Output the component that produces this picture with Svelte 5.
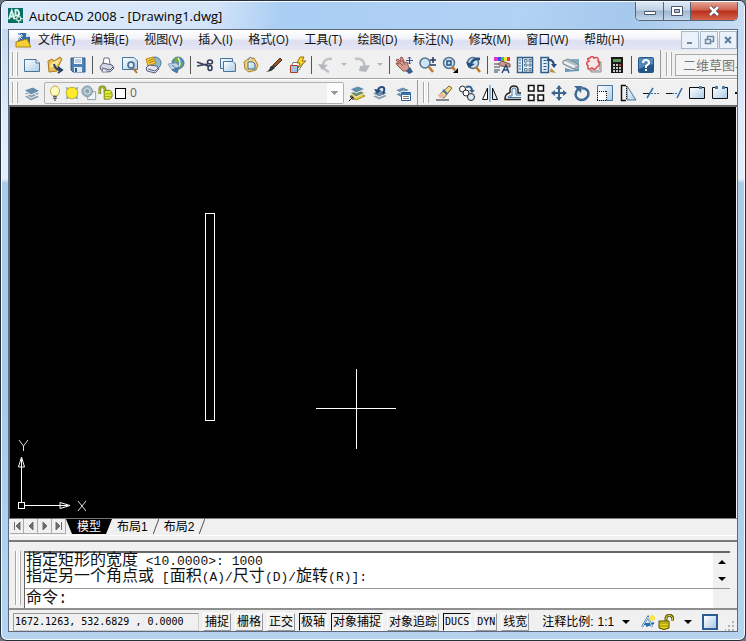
<script>
  const icons = {
    new: '<path d="M1.500 3.500H13L16.500 7V15.500H1.500Z" fill="url(#sheet)" stroke="#47749c"/><path d="M13 3.500V7H16.500" fill="#fff" stroke="#47749c"/>',
    open: '<path d="M2 5L6 3L8 5L14 1L16 3L13 9L11 15L3 16Z" fill="#e9bd55" stroke="#a9791e"/><path d="M5 7L15 3L11 9L4 12Z" fill="#fbe5a0"/><path d="M8 8Q9 14 15 14M12 11L16 14L12 17" fill="none" stroke="#24415f" stroke-width="2"/>',
    save: '<path d="M2 2H16V16H4L2 14Z" fill="#4f81b4" stroke="#2e5c8b"/><path d="M5 2H13V8H5Z" fill="#f3f8fc"/><path d="M6 4H12M6 6H12" stroke="#8bacc9"/><path d="M5 11H13V16H5Z" fill="#dbe7f1"/><path d="M7 12V16" stroke="#2e5c8b" stroke-width="2"/>',
    print: '<path d="M5 8L6 2H11L12 8" fill="#fff" stroke="#6d7089"/><path d="M2 11L5 7L14 9L16 12L12 16L3 14Z" fill="#d5d7e1" stroke="#5c5f7b"/><path d="M4 12L12 14L15 11" fill="none" stroke="#5c5f7b"/><path d="M5 13L4 16H10" fill="#fff" stroke="#777b92"/>',
    preview: '<path d="M1.500 1.500H13L16.500 5V13.500H1.500Z" fill="url(#sheet)" stroke="#47749c"/><circle cx="10" cy="9" r="3" fill="#d3e9f5" stroke="#456789" stroke-width="1.500"/><path d="M12 12L16 17" stroke="#ad722d" stroke-width="2"/>',
    publish: '<circle cx="11" cy="7" r="6" fill="#8fb7cc" stroke="#47779a"/><path d="M2 3L9 1L12 7L4 10Z" fill="#ffcf3b" stroke="#bd8315"/><path d="M4 5L9 3M5 7L10 5" stroke="#9b7a1e"/><path d="M2 12L5 9L13 10L15 13L11 17L3 15Z" fill="#e2e4ea" stroke="#555e82"/><path d="M4 13L11 15L14 12" fill="none" stroke="#555e82"/>',
    web: '<circle cx="11" cy="7" r="6" fill="#4c92c8" stroke="#51768d"/><path d="M7 3Q10 0 13 2L12 6L8 7ZM12 9L16 7L14 12Z" fill="#6fad45"/><path d="M11 2Q15 7 11 12" fill="none" stroke="#ffe8a0" stroke-width="1.500"/><path d="M1 8L9 7L13 11L10 14L5 14Z" fill="#c6d5e4" stroke="#8ea5bb"/><path d="M5 9L10 13M12 11L10 17L5 14Z" fill="#4c78a6" stroke="#4c78a6"/>',
    cut: '<path d="M1 6L12 10M1 10L12 8" stroke="#39435d" stroke-width="1.500"/><ellipse cx="14" cy="6" rx="2.500" ry="2" fill="none" stroke="#30395c" stroke-width="1.500"/><ellipse cx="14" cy="12" rx="2" ry="2.500" fill="none" stroke="#30395c" stroke-width="1.500"/>',
    copy: '<path d="M1.500 2.500H13.500V12.500H1.500Z" fill="url(#sheet)" stroke="#47749c"/><path d="M4.500 5.500H14L16.500 8V15.500H4.500Z" fill="url(#sheet)" stroke="#47749c"/>',
    paste: '<path d="M2 6L6 3L12 2L16 9L14 14L7 16L3 13Z" fill="#ecd27e" stroke="#a08127"/><path d="M6 4L8 1L11 3" fill="#ddd" stroke="#777"/><path d="M6 6H11L13 8V13H6Z" fill="url(#sheet)" stroke="#416d95"/>',
    brush: '<path d="M15 2L17 4L10 11L8 9Z" fill="#995522" stroke="#45332b"/><path d="M8 9L10 12L6 15L1 16Q5 14 5 11Z" fill="#30343a"/>',
    blockedit: '<path d="M5 6.500H15.500L11 14H2Z" fill="#fff" stroke="#777"/><path d="M2.500 9.500H9.500V16.500H2.500Z" fill="#9fc2e3" stroke="#b13b22"/><path d="M12 1H16L14 5H18L10 12L12 7H9Z" fill="#ffdc25" stroke="#966c16"/>',
    undo: '<path d="M12 16Q5 13 6 8Q8 2 15 3" fill="none" stroke="#bfc1c4" stroke-width="2.500"/><path d="M1 8L11 9L5 14Z" fill="#b4b7bc"/>',
    redo: '<path d="M2 3Q9 2 11 7Q12 10 10 12" fill="none" stroke="#bfc1c4" stroke-width="2.500"/><path d="M7 10L17 9L13 16L6 15Z" fill="#b4b7bc"/>',
    pan: '<path d="M1 4L3 3L6 6L5 2L7 1L10 7L12 6L14 12L13 15L8 15L2 9L1 7L4 8Z" fill="#d69b91" stroke="#965950"/><path d="M3 5L8 10M7 4L10 9" stroke="#965950"/><path d="M11 15L15 11L18 16L14 18Z" fill="#395b8d"/><path d="M14.500 1V8M11 4.500H18M13 2.500L14.500 1L16 2.500M13 6.500L14.500 8L16 6.500" fill="none" stroke="#354b86"/>',
    zoomrt: '<circle cx="7" cy="7" r="5" fill="#cbe3f2" stroke="#53718d" stroke-width="1.500"/><path d="M11 11L15 16" stroke="#bd7928" stroke-width="2.500"/><path d="M12 4H18M15 1V7M12 9H18" stroke="#26375b" stroke-width="1.500"/>',
    zoomwin: '<circle cx="8" cy="7" r="5.500" fill="#cbe3f2" stroke="#53718d" stroke-width="1.500"/><path d="M6 5H10V9H6Z" fill="#b7d7ef" stroke="#28547f" stroke-width="1.500"/><path d="M11 11L14 14" stroke="#bd7928" stroke-width="2.500"/><path d="M17 12V17H12Z" fill="#000"/>',
    zoomprev: '<circle cx="9" cy="7" r="5.500" fill="#cbe3f2" stroke="#53718d" stroke-width="1.500"/><path d="M12 11L16 16" stroke="#bd7928" stroke-width="2.500"/><path d="M16 3Q10 2 7 7" fill="none" stroke="#294e7e" stroke-width="2.500"/><path d="M2 6L11 8L5 12Z" fill="#294e7e"/>',
    props: '<path d="M1 1H5V5H1Z" fill="#e132c2"/><path d="M5 1H8V5H5Z" fill="#4549ed"/><path d="M8 1H11V5H8Z" fill="#39c940"/><path d="M11 1H14V5H11Z" fill="#f4e43c"/><path d="M14 1H17V5H14Z" fill="#ee392d"/><path d="M5 8L9 5L17 8V11L8 10Z" fill="#cf9889" stroke="#75534b"/><path d="M1 8H5M1 11H7M1 14H7M1 16H5" stroke="#333e61"/><path d="M9 17L13 9L16 17M11 14H15" fill="none" stroke="#294b7b" stroke-width="1.500"/>',
    dcenter: '<path d="M1.500 1.500H16.500V16.500H1.500Z" fill="#e3eff8" stroke="#315c86" stroke-width="1.500"/><path d="M6.500 2V16" stroke="#315c86"/><path d="M3 4H5M3 7H5M3 10H5M3 13H5" stroke="#2b669b"/><path d="M8.500 3.500H11V6H8.500ZM13 3.500H15V6H13ZM8.500 8H11V10H8.500ZM13 8H15V10H13ZM8.500 12.500H11V15H8.500ZM13 12.500H15V15H13Z" fill="#fff6bd" stroke="#577a99"/>',
    palettes: '<path d="M2 1.500H9.500V16.500H2Z" fill="#deecf8" stroke="#315c86" stroke-width="1.500"/><path d="M4.500 4.500H7.500M4.500 7.500H7.500M4.500 10.500H7.500M4.500 13.500H7.500" stroke="#315c86"/><path d="M8 4Q14 3 15 9" fill="none" stroke="#284a76" stroke-width="2"/><path d="M12 8H18L15 12Z" fill="#284a76"/><path d="M12 12L17 17L11 16Z" fill="#ba8c38"/>',
    sheetset: '<path d="M8 3H17V10L12 9Z" fill="#82aac2"/><path d="M1 5L6 3L16 8L17 11L11 13L1 8Z" fill="#b3bfc4" stroke="#778b94"/><path d="M2 6L13 11" stroke="#f4f6f7" stroke-width="2"/><path d="M3 12L10 14L17 12V15L3 16Z" fill="#6b95b1"/>',
    markup: '<path d="M4 4H14V14H4ZM6 6H16V16H6Z" fill="#ddd" stroke="#888"/><path d="M2 2H14V14H2Z" fill="#f6e6e6"/><path d="M4 5Q1 2 5 2Q7-1 9 2Q14 0 13 5Q16 9 12 11Q10 15 7 12Q2 15 3 10Q0 7 4 5Z" fill="none" stroke="#dc4850" stroke-width="1.500"/>',
    calc: '<path d="M3 1H15V17H3Z" fill="#191919"/><path d="M5 3H13V6H5Z" fill="#5c9b5b"/><path d="M5 9H7M8 9H10M11 9H13M5 12H7M8 12H10M11 12H13M5 15H7M8 15H10M11 15H13" stroke="#fff" stroke-width="1.500"/><path d="M11 9H13" stroke="#d14545" stroke-width="2"/>',
    help: '<rect x="1" y="1" width="16" height="16" rx="2" fill="#235789"/><path d="M2 2H16V8Q9 9 2 13Z" fill="#5289b8"/><path d="M6 7Q6 4 9 4Q12 4 12 7Q12 8 9 10V12M9 13V15" fill="none" stroke="#fff" stroke-width="2"/>',
    layers: '<path d="M1 12L10 9L17 13L8 17ZM1 9L10 6L17 10L8 14Z" fill="#899cad" stroke="#eef3f7"/><path d="M1 6L10 3L17 7L8 11Z" fill="#6b8eaa" stroke="#eef3f7"/>',
    layermk: '<path d="M2 12L11 9L17 12L8 16Z" fill="#ebcd3a" stroke="#a78d1a"/><path d="M2 9L11 6L17 9L8 13Z" fill="#718d63" stroke="#e7ecef"/><path d="M2 5L10 2L17 5L8 9Z" fill="#638cab" stroke="#e7ecef"/><path d="M1 17L5 13M2 13H5V16" fill="none" stroke="#111"/>',
    layerprev: '<path d="M1 12L10 9L17 12L8 16Z" fill="#8b9da8" stroke="#eef3f7"/><path d="M1 9L10 6L17 9L8 13Z" fill="#6f8ca5" stroke="#eef3f7"/><path d="M12 10Q15 3 11 3Q8 3 7 6" fill="none" stroke="#244b80" stroke-width="2"/><path d="M3 5L10 6L6 10Z" fill="#244b80"/>',
    layerstate: '<path d="M1 10L10 7L17 10L8 14ZM1 6L9 3L16 6L8 10Z" fill="#7191ab" stroke="#eef3f7"/><path d="M7.500 8.500H16.500V16.500H7.500Z" fill="#fff" stroke="#245e9c"/><path d="M7 9H17V11H7Z" fill="#3574b2"/><path d="M9 12.500H15M9 14.500H15" stroke="#777"/>',
    erase: '<path d="M1 16H14" stroke="#222"/><path d="M14 2L17 4L9 14L5 13L4 11Z" fill="#f5da86" stroke="#7b6732"/><path d="M6 9L10 12L8 14L5 14L3 11Z" fill="#e8b9a8"/><path d="M8 6L12 10" stroke="#3d65a2" stroke-width="2"/>',
    copyobj: '<circle cx="4.500" cy="5" r="3" fill="#fff" stroke="#222"/><circle cx="8" cy="9" r="3" fill="#fff" stroke="#222"/><circle cx="13" cy="13" r="3.500" fill="#ddeaf5" stroke="#222"/><path d="M8 3Q14 1 14 7" fill="none" stroke="#315d8d" stroke-width="2"/><path d="M11 6H17L14 9Z" fill="#315d8d"/>',
    mirror: '<path d="M6.500 4V15.500H1.500Z" fill="#fff" stroke="#111"/><path d="M11.500 4V15.500H16.500Z" fill="#dfeaf3" stroke="#111"/><path d="M9 1V18" stroke="#3382bd"/>',
    offset: '<path d="M6 9V6Q6 2 10 2Q14 2 14 6V9H17M6 9H5Q1 10 1 15.500H17" fill="none" stroke="#222" stroke-width="1.500"/><path d="M8 12V6Q8 4 10 4Q12 4 12 6V11H17M8 12H5L4 13.500H17" fill="none" stroke="#3f79b1"/>',
    array: '<path d="M1.500 1.500H7V7H1.500ZM11 1.500H16.500V7H11ZM1.500 11H7V16.500H1.500ZM11 11H16.500V16.500H11Z" fill="#fff" stroke="#111" stroke-width="1.500"/>',
    move: '<path d="M9 2V16M2 9H16" stroke="#3d658e" stroke-width="2"/><path d="M9 1L12 5H6ZM9 17L12 13H6ZM1 9L5 6V12ZM17 9L13 6V12Z" fill="#3d658e"/>',
    rotate: '<path d="M5 5Q0 11 5 15Q11 18 15 12Q17 5 9 4" fill="none" stroke="#416b94" stroke-width="2.500"/><path d="M1 2L9 2L8 9Z" fill="#416b94"/>',
    scale: '<path d="M1.500 1.500H16.500V16.500H1.500Z" fill="url(#sheet)" stroke="#47749c"/><path d="M1.500 7.500H10.500V16.500H1.500Z" fill="#fff"/><path d="M1 7.500H11M10.500 7V17M1 16.500H11M1.500 7V17" stroke="#111" stroke-dasharray="1 1"/>',
    stretch: '<path d="M8 2L17 16H8Z" fill="url(#sheet)" stroke="#47749c"/><path d="M7 1.500H2.500V16.500H7" fill="none" stroke="#111" stroke-width="1.500"/><path d="M7.500 2V16" stroke="#111" stroke-dasharray="1 1"/>',
    trim: '<path d="M1 9.500H7" stroke="#111"/><path d="M9 9.500H18" stroke="#2d70ab" stroke-dasharray="2 1"/><path d="M11 4L5 14" stroke="#2d70ab" stroke-width="1.500"/>',
    extend: '<path d="M1 9.500H7" stroke="#111"/><path d="M7 9.500H12" stroke="#2d70ab" stroke-dasharray="2 1"/><path d="M17 4L12 14" stroke="#2d70ab" stroke-width="1.500"/>',
    breakpt: '<path d="M1.500 3.500V14.500H16.500V3.500Z" fill="url(#sheet)" stroke="#111"/><path d="M11 2H14V5H11Z" fill="#4a80b0"/>',
    breakseg: '<path d="M5 3.500H1.500V14.500H16.500V3.500H13" fill="url(#sheet)" stroke="#111"/><path d="M4 2H7V5H4ZM11 2H14V5H11Z" fill="#4a80b0"/>',
    join: '<path d="M1 9H17" stroke="#111" stroke-width="2"/><path d="M6 5V13L11 9Z" fill="#111"/>',
    bulb: '<path d="M6 12Q3 8 4 5Q6 1 9 1Q12 1 14 5Q15 8 12 12Z" fill="#fffbc0" stroke="#b4a642"/><path d="M7 13H11M7 15H11M8 17H10" stroke="#555" stroke-width="1.500"/>',
    sun: '<path d="M2 2L5 3L13 3L16 2L15 6V12L16 16L12 15H6L2 16L3 12V6Z" fill="#8eaab8"/><circle cx="9" cy="9" r="6.500" fill="#ffeb2c" stroke="#c0ac21"/>',
    vpfreeze: '<path d="M9.500 7.500H16.500V16.500H7.500V9.500Z" fill="#eef5f8" stroke="#8295a0"/><circle cx="7" cy="7" r="6" fill="#a3b7c2" stroke="#7c949f"/><circle cx="7" cy="7" r="3" fill="#8ba3b0" stroke="#dfe8ec"/>',
    unlock: '<path d="M2 10V5Q2 2 5 2Q8 2 8 6V9" fill="none" stroke="#6e7b16" stroke-width="3"/><path d="M2 10V5Q2 2 5 2Q8 2 8 6V9" fill="none" stroke="#d8e83b"/><path d="M7 6H13Q16 7 16 11Q16 16 11 16H7Z" fill="#e0ed32" stroke="#6e7b16"/><path d="M8 10H15M8 13H15" stroke="#99a51f"/>'
  };

  const menus = ['文件(F)', '编辑(E)', '视图(V)', '插入(I)', '格式(O)', '工具(T)', '绘图(D)', '标注(N)', '修改(M)', '窗口(W)', '帮助(H)'];

  const standard = [
    'new', 'open', 'save', '|', 'print', 'preview', 'publish', 'web', '|',
    'cut', 'copy', 'paste', 'brush', 'blockedit', '|', 'undo', 'v', 'redo', 'v', '|',
    'pan', 'zoomrt', 'zoomwin', 'zoomprev', '|',
    'props', 'dcenter', 'palettes', 'sheetset', 'markup', 'calc', '|', 'help'
  ];
  const layerTools = ['layermk', 'layerprev', 'layerstate'];
  const modify = ['erase', 'copyobj', 'mirror', 'offset', 'array', 'move', 'rotate', 'scale', 'stretch', 'trim', 'extend', 'breakpt', 'breakseg', 'join'];

  const navPaths = ['M4.500 4V12M10 4V12L6 8Z', 'M9 4V12L5 8Z', 'M5 4V12L9 8Z', 'M4 4V12L8 8ZM9.500 4V12'];

  let modes = $state([
    { name: '捕捉', on: false },
    { name: '栅格', on: false },
    { name: '正交', on: false },
    { name: '极轴', on: true },
    { name: '对象捕捉', on: true },
    { name: '对象追踪', on: false },
    { name: 'DUCS', on: true },
    { name: 'DYN', on: false },
    { name: '线宽', on: false }
  ]);

  const history = ['指定矩形的宽度 <10.0000>: 1000', '指定另一个角点或 [面积(A)/尺寸(D)/旋转(R)]:'];

  // latin runs are set smaller than the hanzi so two of them fill one cell
  const isLatin = (text) => text.charCodeAt(0) < 128;
  const runs = (line) => line.match(/[\x00-\x7f]+|[^\x00-\x7f]+/g);
</script>

{#snippet icon(name)}
  <svg class="icon" viewBox="0 0 18 18" aria-hidden="true">{@html icons[name]}</svg>
{/snippet}

{#snippet tools(list)}
  {#each list as name}
    {#if name === '|'}
      <span class="sep"></span>
    {:else if name === 'v'}
      <button class="drop" aria-label="more"></button>
    {:else}
      <button class="tool" aria-label={name}>{@render icon(name)}</button>
    {/if}
  {/each}
{/snippet}

<svg class="defs" width="0" height="0" aria-hidden="true">
  <linearGradient id="sheet" x1="0" y1="0" x2="1" y2="1">
    <stop offset="0" stop-color="#fff" />
    <stop offset="1" stop-color="#a9cbe4" />
  </linearGradient>
</svg>

<div class="window">
  <header class="title-bar">
    <svg class="app-icon" viewBox="0 0 16 16" aria-hidden="true">
      <path d="M0 0H16V16H0Z" fill="#087062" />
      <path d="M1 12L4 3L7 12M2 9H6M8 2V8H11Q13 5 10 2Z" fill="none" stroke="#d9f4ed" stroke-width="2" />
      <path d="M11.500 5V16M6 11.500H16" stroke="#fff" />
      <path d="M9.500 9.500H13.500V13.500H9.500Z" fill="#087062" stroke="#fff" />
    </svg>
    <h1>AutoCAD 2008 - [Drawing1.dwg]</h1>
    <div class="win-buttons">
      <button class="win-min" aria-label="minimize">
        <svg viewBox="0 0 14 12"><path d="M1.500 6.500H12.500V9.500H1.500Z" fill="#fff" stroke="#4b586a" /></svg>
      </button>
      <button class="win-max" aria-label="maximize">
        <svg viewBox="0 0 14 12"><path d="M1.500 1.500H12.500V10.500H1.500Z" fill="#fff" stroke="#4b586a" /><path d="M4.500 4.500H9.500V7.500H4.500Z" fill="#a9c1dc" stroke="#4b586a" /></svg>
      </button>
      <button class="win-close" aria-label="close">
        <svg viewBox="0 0 14 12"><path d="M3 2L11 10M11 2L3 10" stroke="#553840" stroke-width="4" /><path d="M3 2L11 10M11 2L3 10" stroke="#fff" stroke-width="2.500" /></svg>
      </button>
    </div>
  </header>

  <div class="client">
    <nav class="menu-bar">
      <svg class="doc-icon" viewBox="0 0 16 16" aria-hidden="true">
        <path d="M3 1H11L15 5V13H3Z" fill="#326aa5" />
        <path d="M11 1V5H15" fill="#d9e9f5" />
        <path d="M1 10L12 7L16 15H1Z" fill="#f5cf35" stroke="#aa8418" />
        <path d="M4 1V8M1 4H8M2 2L7 7M7 2L2 7" stroke="#fff" />
      </svg>
      <div class="menus">
        {#each menus as menu}
          <button class="menu">{menu}</button>
        {/each}
      </div>
      <div class="mdi">
        <button aria-label="minimize drawing"><svg viewBox="0 0 12 12"><path d="M3 9H8" stroke="#6b87a5" stroke-width="2" /></svg></button>
        <button aria-label="restore drawing"><svg viewBox="0 0 12 12"><path d="M4.500 5V2.500H10.500V7.500H8M4 2.500H11M2.500 5.500H7.500V9.500H2.500ZM2 5.500H8" fill="none" stroke="#6b87a5" stroke-width="1.500" /></svg></button>
        <button aria-label="close drawing"><svg viewBox="0 0 12 12"><path d="M3 3L9 9M9 3L3 9" stroke="#607d9b" stroke-width="2" /></svg></button>
      </div>
    </nav>

    <div class="toolbars">
      <div class="group">
        <span class="grip"></span>
        {@render tools(standard)}
      </div>
      <div class="group last">
        <span class="grip"></span>
        <select class="workspace" aria-label="工作空间">
          <option>二维草图与注释</option>
        </select>
      </div>
    </div>
    <div class="toolbars">
      <div class="group">
        <span class="grip"></span>
        {@render tools(['layers'])}
        <div class="layer">
          {@render icon('bulb')}
          {@render icon('sun')}
          {@render icon('vpfreeze')}
          {@render icon('unlock')}
          <span class="swatch"></span>
          <select aria-label="图层">
            <option>0</option>
          </select>
        </div>
        {@render tools(layerTools)}
      </div>
      <div class="group last">
        <span class="grip"></span>
        {@render tools(modify)}
      </div>
    </div>

    <main class="model-space">
      <svg class="drawing" aria-label="Drawing1">
        <g fill="none" stroke="#fff" shape-rendering="crispEdges">
          <rect x="195.500" y="106.500" width="9" height="207" />
          <path d="M346.500 262V342M306 301.500H386" />
          <path d="M8.500 395.500H14.500V401.500H8.500ZM11.500 395V360M15 398.500H50" />
        </g>
        <path d="M11.500 350L8.500 360H14.500ZM11.500 352V360M60 398.500L50 395.500V401.500ZM50 398.500H58" fill="none" stroke="#fff" />
        <path d="M9 333L13.500 339L18 333M13.500 339V344M68 394L76 404M76 394L68 404" fill="none" stroke="#ddd" />
      </svg>
    </main>

    <div class="tabs">
      {#each navPaths as d}
        <button class="nav" aria-label="scroll tabs"><svg viewBox="0 0 14 16"><path {d} fill="#6b6b6b" stroke="#6b6b6b" /></svg></button>
      {/each}
      <button class="tab active">模型</button>
      <button class="tab">布局1</button>
      <svg class="slash" viewBox="0 0 6 16"><path d="M6 0L0 16" stroke="#444" /></svg>
      <button class="tab">布局2</button>
      <svg class="slash" viewBox="0 0 6 16"><path d="M6 0L0 16" stroke="#444" /></svg>
    </div>

    <section class="command">
      <span class="grip"></span>
      <div class="console">
        <div class="history">
          <div class="lines">
            {#each history as line}
              <p>{#each runs(line) as run}<span class:latin={isLatin(run)}>{run}</span>{/each}</p>
            {/each}
          </div>
          <div class="scroll">
            <button aria-label="scroll up"><svg viewBox="0 0 8 8"><path d="M0 6L4 2L8 6Z" /></svg></button>
            <button aria-label="scroll down"><svg viewBox="0 0 8 8"><path d="M0 2L4 6L8 2Z" /></svg></button>
          </div>
        </div>
        <div class="prompt">
          <label for="cmd">命令:</label>
          <input id="cmd" type="text" />
        </div>
      </div>
    </section>

    <footer class="status">
      <output class="coords">1672.1263, 532.6829 , 0.0000</output>
      {#each modes as mode}
        <button class="mode" class:on={mode.on} class:code={isLatin(mode.name)} aria-pressed={mode.on} onclick={() => (mode.on = !mode.on)}>{mode.name}</button>
      {/each}
      <span class="scale-label">注释比例:</span>
      <button class="scale">1:1 <svg viewBox="0 0 8 8"><path d="M0 2H8L4 6Z" /></svg></button>
      <div class="tray">
        <svg class="tray-icon" viewBox="0 0 16 16" aria-hidden="true">
          <path d="M2 13L8 3L12 13M4 10H11M6 12L14 9" fill="none" stroke="#2b69ab" stroke-width="2" />
          <path d="M2 13L8 3L12 13" fill="none" stroke="#d4e8f8" />
          <circle cx="12" cy="4" r="3" fill="#ffe34b" />
        </svg>
        <svg class="tray-icon" viewBox="0 0 16 16" aria-hidden="true">
          <path d="M8 8V4Q9 1 12 1Q15 2 15 7" fill="none" stroke="#5d5608" stroke-width="3" />
          <path d="M8 8V4Q9 1 12 1Q15 2 15 7" fill="none" stroke="#ded651" />
          <path d="M1 7H11V14Q6 17 1 14Z" fill="#e4d516" stroke="#51490a" />
          <path d="M2 9H10M2 12H10" stroke="#90870f" />
        </svg>
        <button class="tray-menu" aria-label="tray menu"><svg viewBox="0 0 8 8"><path d="M0 2H8L4 6Z" /></svg></button>
        <button class="clean" aria-label="clean screen"></button>
      </div>
      <svg class="resize" viewBox="0 0 10 10" aria-hidden="true">
        <path d="M7 0H9V2H7ZM7 4H9V6H7ZM7 8H9V10H7ZM3 4H5V6H3ZM3 8H5V10H3ZM0 8H1V10H0Z" fill="#b5b5b5" />
      </svg>
    </footer>
  </div>
</div>

<style>
  :global(body) {
    background: #6f7780;
  }

  * {
    box-sizing: border-box;
  }

  .window {
    display: flex;
    flex-direction: column;
    height: 100vh;
    min-height: 480px;
    padding: 0 7px 8px;
    border: 1px solid #26313f;
    border-radius: 7px;
    box-shadow: inset 0 0 0 1px #f4faff;
    background: linear-gradient(#b3d2f1 0, #c3daf2 28px, #dfeafa 110px, #e4eefb 178px, #abcbea 182px, #a9c9e8 380px, #b6d4ef 100%);
    color: #111;
    font: 12px/16px "Open Sans", "Noto Sans CJK SC", sans-serif;
    overflow: hidden;
  }

  .defs {
    position: absolute;
  }

  button,
  select,
  input {
    margin: 0;
    padding: 0;
    border: 0;
    border-radius: 0;
    background: none;
    color: inherit;
    font: inherit;
  }

  button {
    display: flex;
    align-items: center;
    justify-content: center;
    flex: none;
    white-space: nowrap;
  }

  svg {
    display: block;
    flex: none;
  }

  .title-bar {
    display: flex;
    align-items: center;
    flex: none;
    height: 28px;
    background: linear-gradient(100deg, #dceafb 0, #d5e5f8 28%, #a9cdf3 38%, #b2d2f4 70%, #a5c8ec 84%, #c9def4 100%);
    margin: 0 -6px;
    padding: 0 6px;
    border-top: 1px solid #f4faff;
  }

  .app-icon {
    width: 15px;
    height: 15px;
    margin-right: 6px;
  }

  h1 {
    flex: 1;
    margin: 0;
    font-size: 13px;
    line-height: 16px;
    font-weight: 400;
    color: #000;
  }

  .win-buttons {
    display: flex;
    align-self: flex-start;
    border: 1px solid #56667a;
    border-top: 0;
    border-radius: 0 0 5px 5px;
    overflow: hidden;
  }

  .win-buttons button {
    height: 18px;
    background: linear-gradient(#dce8f5 0, #c2d3e6 45%, #9fb6cf 50%, #c4d8ec 100%);
    border-right: 1px solid #56667a;
  }

  .win-buttons svg {
    width: 14px;
    height: 12px;
  }

  .win-buttons .win-min {
    width: 28px;
  }

  .win-buttons .win-max {
    width: 27px;
  }

  .win-buttons .win-close {
    width: 46px;
    border-right: 0;
    background: linear-gradient(#e3a597 0, #d0604c 45%, #b92f1b 50%, #d4654c 100%);
  }

  .client {
    display: flex;
    flex-direction: column;
    flex: 1;
    min-height: 0;
    border: 1px solid #5c6b7c;
    background: #f0f0f0;
  }

  .menu-bar {
    display: flex;
    align-items: center;
    flex: none;
    height: 20px;
    padding-left: 6px;
    background: linear-gradient(#fff 0, #f4f5fb 40%, #dcdff0 55%, #e5e7f5 100%);
  }

  .doc-icon {
    width: 16px;
    height: 16px;
  }

  .menus {
    display: flex;
    justify-content: space-between;
    width: 600px;
  }

  .menu {
    padding: 0 7px;
  }

  .mdi {
    display: flex;
    gap: 1px;
    margin-left: auto;
  }

  .mdi button {
    width: 18px;
    height: 18px;
    border: 1px solid #a5b8cc;
    background: #eaf1f9;
  }

  .mdi svg {
    width: 12px;
    height: 12px;
  }

  .toolbars {
    display: flex;
    flex: none;
    height: 29px;
    border-bottom: 1px solid #a3a3a3;
    overflow: hidden;
  }

  .toolbars + .toolbars {
    height: 28px;
    border-top: 1px solid #fff;
    border-bottom: 2px solid #6b6b6b;
  }

  .group {
    display: flex;
    align-items: center;
    flex: none;
    padding: 1px 3px 0 3px;
    border-right: 1px solid #9a9a9a;
  }

  .last {
    flex: 1 0 0;
    padding-left: 5px;
    border-right: 0;
  }

  .grip {
    flex: none;
    align-self: stretch;
    width: 6px;
    margin: 1px 2px 2px 0;
    border: solid #a8a8a8;
    border-width: 0 1px;
    box-shadow: inset 1px 0 #fff, inset -1px 0 #fff;
  }

  .last .grip {
    margin-right: 3px;
  }

  .tool {
    width: 23px;
    height: 23px;
  }

  .icon {
    width: 18px;
    height: 18px;
  }

  .sep {
    width: 6px;
    height: 18px;
    background: linear-gradient(#555, #555) 3px 0 / 1px 100% no-repeat;
  }

  .drop {
    width: 13px;
    height: 23px;
  }

  .drop::before {
    content: "";
    border: 3px solid transparent;
    border-top-color: #b5b5b5;
    border-bottom: 0;
  }

  .workspace {
    flex: none;
    width: 160px;
    height: 22px;
    padding-left: 7px;
    border: 1px solid #a9a9a9;
    appearance: none;
    color: #777;
    background: #f4f4f4;
    font-size: 13px;
  }

  .layer {
    display: flex;
    align-items: center;
    width: 300px;
    height: 22px;
    margin: 0 1px;
    padding-left: 2px;
    border: 1px solid #b0b0b0;
    border-radius: 2px;
    background: #f0f0f0;
  }

  .layer .icon {
    width: 16px;
    height: 16px;
    margin-right: 1px;
  }

  .swatch {
    flex: none;
    width: 11px;
    height: 11px;
    border: 1px solid #000;
    background: #fff;
  }

  .layer select {
    flex: 1;
    height: 20px;
    padding-left: 4px;
    appearance: none;
    color: #666;
    background:
      linear-gradient(135deg, #999 50%, transparent 50%) right 4px center / 4px 4px no-repeat,
      linear-gradient(225deg, #999 50%, transparent 50%) right 8px center / 4px 4px no-repeat,
      linear-gradient(#fcfcfc, #fcfcfc) right / 16px 100% no-repeat;
  }

  .model-space {
    display: flex;
    flex: 1;
    min-height: 0;
    margin-right: 1px;
    border-left: 1px solid #6b6b6b;
    background: #000;
    cursor: crosshair;
  }

  .drawing {
    flex: 1;
    width: 100%;
    height: 100%;
  }

  .tabs {
    display: flex;
    flex: none;
    height: 24px;
    padding: 0 0 7px 1px;
    border-top: 1px solid #777;
    border-bottom: 2px solid #7a7a7a;
    background: linear-gradient(#fff, #fff) 0 16px / 100% 1px no-repeat;
  }

  .tabs > * {
    height: 15px;
  }

  .nav {
    width: 14px;
    border: solid #aaa;
    border-width: 0 1px 1px 0;
  }

  .nav svg {
    width: 14px;
    height: 16px;
  }

  .tab {
    padding: 0 5px;
    color: #000;
    font-family: "Liberation Sans", "Noto Sans CJK SC", sans-serif;
  }

  .tab.active {
    padding: 0 11px;
    background: #000;
    color: #fff;
    clip-path: polygon(0 0, 100% 0, calc(100% - 6px) 100%, 6px 100%);
  }

  .slash {
    width: 6px;
  }

  .command {
    display: flex;
    flex: none;
    padding: 9px 7px 0 6px;
    border-bottom: 2px solid #8f8f8f;
  }

  .command .grip {
    margin: 0 3px 3px 0;
  }

  .console {
    flex: 1;
    min-width: 0;
    border: solid #666;
    border-width: 2px 0 0 1px;
    font: 16px/16px "Liberation Mono", "Noto Sans CJK SC", monospace;
  }

  .history {
    display: flex;
    height: 36px;
    border-bottom: 1px solid #999;
    background: #fff;
  }

  .lines {
    flex: 1;
    padding-left: 1px;
  }

  .lines p {
    height: 16px;
    margin: 0;
    white-space: pre;
  }

  .latin {
    font-size: 13px;
  }

  .scroll {
    display: grid;
    width: 17px;
    background: #f0f0f0;
  }

  .scroll button {
    width: 17px;
  }

  .scroll svg,
  .scale svg,
  .tray-menu svg {
    width: 8px;
    height: 8px;
  }

  .prompt {
    display: flex;
    align-items: center;
    height: 19px;
    margin-right: 17px;
    padding-left: 1px;
    background: #fff;
  }

  .prompt input {
    flex: 1;
    min-width: 0;
    outline: 0;
  }

  .status {
    display: flex;
    align-items: center;
    flex: none;
    gap: 4px;
    height: 21px;
    padding: 2px 2px 0 4px;
    color: #000;
    font: 12px/16px "Liberation Sans", "Noto Sans CJK SC", sans-serif;
    white-space: nowrap;
  }

  .coords {
    flex: none;
    width: 186px;
    height: 18px;
    padding-left: 1px;
    border: 1px solid;
    border-color: #999 #ccc #ccc #999;
    font: 10px/16px "DejaVu Sans Mono", monospace;
  }

  .mode {
    height: 18px;
    padding: 0 1px;
    border: 1px solid;
    border-color: #fff #999 #999 #fff;
  }

  .mode.on {
    border-color: #111 #fff #fff #111;
  }

  .mode.code {
    font: 10px/16px "DejaVu Sans Mono", monospace;
  }

  .scale-label {
    margin-left: 9px;
  }

  .scale {
    gap: 8px;
  }

  .tray {
    display: flex;
    align-items: center;
    gap: 2px;
    margin: 0 3px 0 auto;
  }

  .tray-icon {
    width: 16px;
    height: 16px;
  }

  .tray-menu {
    width: 24px;
    height: 16px;
  }

  .clean {
    width: 16px;
    height: 16px;
    border: 2px solid #2e5c92;
    background: linear-gradient(135deg, #fff, #a9c9e8);
  }

  .resize {
    align-self: flex-end;
    width: 10px;
    height: 10px;
  }
</style>
